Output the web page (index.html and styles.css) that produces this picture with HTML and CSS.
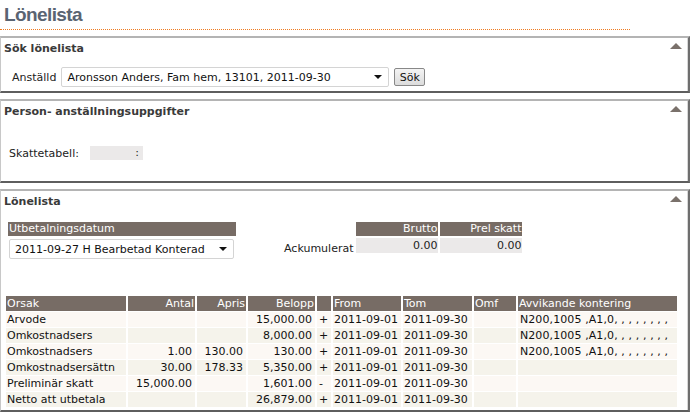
FILE: index.html
```html
<!DOCTYPE html>
<html>
<head>
<meta charset="utf-8">
<link rel="stylesheet" href="styles.css">
</head>
<body>
<h1 class="title">Lönelista</h1>
<div class="rule"></div>

<div class="panel p1">
  <div class="phead"><span>Sök lönelista</span><span class="tri"></span></div>
  <div class="searchrow">
    <span class="lbl">Anställd</span>
    <div class="select wide"><span>Aronsson Anders, Fam hem, 13101, 2011-09-30</span><span class="arrow"></span></div>
    <button class="btn">Sök</button>
  </div>
</div>

<div class="panel p2">
  <div class="phead"><span>Person- anställningsuppgifter</span><span class="tri"></span></div>
  <div class="taxrow">
    <span class="lbl">Skattetabell:</span>
    <span class="taxbox">:</span>
  </div>
</div>

<div class="panel p3">
  <div class="phead"><span>Lönelista</span><span class="tri"></span></div>
  <div class="top">
    <div class="datecol">
      <div class="hbar">Utbetalningsdatum</div>
      <div class="select date"><span>2011-09-27 H Bearbetad Konterad</span><span class="arrow"></span></div>
    </div>
    <div class="acc">
      <span class="acclbl">Ackumulerat</span>
      <div class="accgrid">
        <div class="hcell">Brutto</div>
        <div class="hcell">Prel skatt</div>
        <div class="vcell">0.00</div>
        <div class="vcell">0.00</div>
      </div>
    </div>
  </div>
  <table class="lines">
    <thead>
      <tr>
        <th class="c-orsak">Orsak</th>
        <th class="r c-antal">Antal</th>
        <th class="r c-apris">Apris</th>
        <th class="r c-belopp">Belopp</th>
        <th class="c-sign"></th>
        <th class="c-from">From</th>
        <th class="c-tom">Tom</th>
        <th class="c-omf">Omf</th>
        <th class="c-avv">Avvikande kontering</th>
      </tr>
    </thead>
    <tbody>
      <tr><td>Arvode</td><td class="r"></td><td class="r"></td><td class="r">15,000.00</td><td class="s">+</td><td>2011-09-01</td><td>2011-09-30</td><td></td><td class="k">N200,1005 ,A1,0, , , , , , , ,</td></tr>
      <tr><td>Omkostnadsers</td><td class="r"></td><td class="r"></td><td class="r">8,000.00</td><td class="s">+</td><td>2011-09-01</td><td>2011-09-30</td><td></td><td class="k">N200,1005 ,A1,0, , , , , , , ,</td></tr>
      <tr><td>Omkostnadsers</td><td class="r">1.00</td><td class="r">130.00</td><td class="r">130.00</td><td class="s">+</td><td>2011-09-01</td><td>2011-09-30</td><td></td><td class="k">N200,1005 ,A1,0, , , , , , , ,</td></tr>
      <tr><td>Omkostnadsersättn</td><td class="r">30.00</td><td class="r">178.33</td><td class="r">5,350.00</td><td class="s">+</td><td>2011-09-01</td><td>2011-09-30</td><td></td><td></td></tr>
      <tr><td>Preliminär skatt</td><td class="r">15,000.00</td><td class="r"></td><td class="r">1,601.00</td><td class="s">-</td><td>2011-09-01</td><td>2011-09-30</td><td></td><td></td></tr>
      <tr><td>Netto att utbetala</td><td class="r"></td><td class="r"></td><td class="r">26,879.00</td><td class="s">+</td><td>2011-09-01</td><td>2011-09-30</td><td></td><td></td></tr>
    </tbody>
  </table>
</div>
</body>
</html>
```
FILE: styles.css
```css
* { box-sizing: border-box; }
body {
  margin: 0;
  font-family: "DejaVu Sans", Verdana, sans-serif;
  font-size: 11px;
  color: #222;
  background: #fff;
  width: 693px;
  height: 417px;
  overflow: hidden;
}
.title {
  margin: 0;
  padding: 5px 0 0 4px;
  height: 29px;
  font-family: "Liberation Sans", Arial, sans-serif;
  font-size: 19px;
  font-weight: bold;
  letter-spacing: -0.6px;
  color: #5a6472;
  line-height: 20px;
}
.rule {
  width: 630px;
  border-bottom: 1px dotted #f07a1e;
}
.panel {
  width: 690px;
  border-top: 2px solid #b4b4b4;
  border-left: 1px solid #c8c8c8;
  border-right: 2px solid #6e6e6e;
  border-bottom: 2px solid #5e5e5e;
  box-shadow: inset -1px 0 0 #d8d8d8;
  background: #fff;
}
.p1 { margin-top: 6px; height: 57px; }
.p2 { margin-top: 6px; height: 84px; }
.p3 { margin-top: 6px; height: 223px; }
.phead {
  display: flex;
  justify-content: space-between;
  align-items: flex-start;
  padding: 4px 6px 0 3px;
  height: 20px;
  font-weight: bold;
  color: #3a3a3a;
  font-size: 11px;
}
.tri {
  width: 0;
  height: 0;
  margin-top: 1px;
  border-left: 6px solid transparent;
  border-right: 6px solid transparent;
  border-bottom: 6px solid #7a716b;
}
.searchrow {
  display: flex;
  align-items: center;
  padding: 9px 0 0 11px;
}
.lbl { color: #222; }
.select {
  display: flex;
  justify-content: space-between;
  align-items: center;
  height: 20px;
  border: 1px solid #d4d4d4;
  border-radius: 2px;
  background: #fff;
  color: #111;
  font-size: 11px;
  padding: 0 6px 0 5px;
}
.wide { width: 328px; margin-left: 5px; }
.arrow {
  width: 0; height: 0;
  border-left: 4px solid transparent;
  border-right: 4px solid transparent;
  border-top: 4px solid #111;
}
.btn {
  margin-left: 5px;
  height: 18px;
  width: 31px;
  padding: 0;
  font-family: "DejaVu Sans", sans-serif;
  font-size: 11px;
  color: #111;
  border: 1px solid #888;
  border-radius: 2px;
  background: linear-gradient(#f4f4f4, #dcdcdc);
}
.taxrow {
  display: flex;
  align-items: center;
  padding: 25px 0 0 8px;
}
.taxbox {
  margin-left: 11px;
  width: 53px;
  height: 14px;
  background: #ebe9e9;
  text-align: right;
  padding-right: 4px;
  line-height: 14px;
}
.top {
  display: flex;
  padding: 11px 0 0 7px;
  height: 84px;
}
.datecol { width: 228px; }
.hbar {
  background: #776c65;
  color: #fff;
  height: 14px;
  line-height: 14px;
  padding-left: 1px;
}
.date { margin: 3px 2px 0 1px; width: 225px; font-size: 11px; }
.acc {
  display: flex;
  align-items: flex-start;
  margin-left: 48px;
}
.acclbl { margin-top: 20px; margin-right: 3px; }
.accgrid {
  display: grid;
  grid-template-columns: 82px 82px;
  column-gap: 2px;
  row-gap: 2px;
}
.hcell {
  background: #776c65;
  color: #fff;
  text-align: right;
  height: 14px;
  line-height: 14px;
  padding-right: 1px;
}
.vcell {
  background: #ebe9e9;
  text-align: right;
  height: 15px;
  line-height: 15px;
  padding-right: 1px;
}
.lines {
  margin-left: 3px;
  border-collapse: separate;
  border-spacing: 2px 1px;
  font-size: 11px;
}
.lines th {
  background: #776c65;
  color: #fff;
  font-weight: normal;
  text-align: left;
  height: 15px;
  padding: 0 1px;
  line-height: 15px;
  white-space: nowrap;
}
.lines td {
  height: 15px;
  line-height: 15px;
  padding: 0 3px 0 1px;
  white-space: nowrap;
  color: #111;
}
.lines tbody tr:nth-child(odd) td { background: #fcf8f4; }
.lines tbody tr:nth-child(even) td { background: #f5f3eb; }
.lines .r { text-align: right; }
.lines td.s { padding: 0 0 0 2px; }
.lines td.k { font-size: 11px; letter-spacing: 0.1px; padding-left: 2px; }
.c-orsak { width: 120px; }
.c-antal { width: 67px; }
.c-apris { width: 49px; }
.c-belopp { width: 67px; }
.c-sign { width: 14px; }
.c-from { width: 67px; }
.c-tom { width: 69px; }
.c-omf { width: 42px; }
.c-avv { width: 159px; }
```
